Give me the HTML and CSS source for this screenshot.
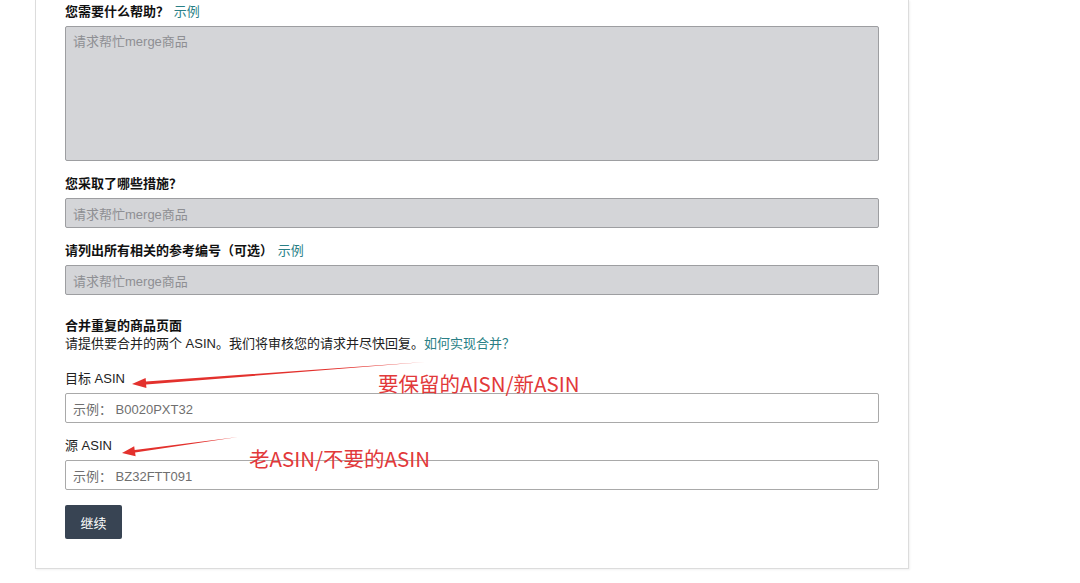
FILE: index.html
```html
<!DOCTYPE html>
<html lang="zh-CN">
<head>
<meta charset="utf-8">
<title>合并重复的商品页面</title>
<link rel="stylesheet" href="styles.css">
</head>
<body>
<div class="page">
  <div class="card">
    <div class="field">
      <div class="label"><b>您需要什么帮助？</b> <a class="link">示例</a></div>
      <div class="box grey area"><span class="ph">请求帮忙merge商品</span></div>
    </div>
    <div class="field">
      <div class="label"><b>您采取了哪些措施？</b></div>
      <div class="box grey"><span class="ph">请求帮忙merge商品</span></div>
    </div>
    <div class="field">
      <div class="label"><b>请列出所有相关的参考编号（可选）</b> <a class="link">示例</a></div>
      <div class="box grey"><span class="ph">请求帮忙merge商品</span></div>
    </div>
    <div class="section">
      <div class="title">合并重复的商品页面</div>
      <div class="desc">请提供要合并的两个 ASIN。我们将审核您的请求并尽快回复。<a class="link">如何实现合并？</a></div>
    </div>
    <div class="field asin">
      <div class="label">目标 ASIN</div>
      <div class="box white"><span class="ph2">示例： B0020PXT32</span></div>
    </div>
    <div class="field asin">
      <div class="label">源 ASIN</div>
      <div class="box white"><span class="ph2">示例： BZ32FTT091</span></div>
    </div>
    <button class="btn">继续</button>
  </div>

  <svg class="arrows" width="1080" height="583" viewBox="0 0 1080 583">
    <polygon points="425,362 146,381.5 145.6,378 132,384 146.4,388 146.1,384.5" fill="#e3312d"/>
    <polygon points="238,437 134.7,449.9 134.2,446.2 122,453 135.6,456.2 135.1,452.5" fill="#e3312d"/>
  </svg>
  <div class="note note1">要保留的AISN/新ASIN</div>
  <div class="note note2">老ASIN/不要的ASIN</div>
</div>
</body>
</html>
```
FILE: styles.css
```css
* { box-sizing: border-box; }
html, body {
  margin: 0;
  padding: 0;
  background: #ffffff;
  font-family: "Liberation Sans", "Noto Sans CJK SC", sans-serif;
  color: #111111;
  font-size: 13px;
}
.page {
  position: relative;
  width: 1080px;
  height: 583px;
  overflow: hidden;
}
.card {
  margin-left: 35px;
  width: 874px;
  border: 1px solid #dcdcdc;
  border-top: none;
  box-shadow: 1px 1px 2px rgba(0,0,0,0.06);
  padding: 3px 29px 29px 29px;
  display: flex;
  flex-direction: column;
  align-items: flex-start;
}
.field {
  width: 814px;
  display: flex;
  flex-direction: column;
  gap: 5px;
  margin-bottom: 14px;
}
.label {
  line-height: 18px;
  height: 18px;
  font-size: 13px;
}
.label b { font-weight: bold; }
.link {
  color: #2a7f86;
  margin-left: 1px;
}
.desc .link { margin-left: 0; }
.box {
  width: 814px;
  height: 30px;
  border: 1px solid #a3a3a3;
  border-radius: 2px;
  padding: 0 7px;
  display: flex;
  align-items: center;
}
.grey {
  background: #d4d5d8;
  border-color: #9d9ea1;
}
.area {
  height: 135px;
  align-items: flex-start;
  padding-top: 4px;
}
.ph {
  color: #8e8f93;
  font-size: 13px;
}
.white { background: #ffffff; border-color: #a9a9a9; }
.ph2 { color: #6f6f6f; font-size: 13px; }
.section {
  margin-top: 8px;
  margin-bottom: 17px;
}
.title {
  font-weight: bold;
  line-height: 18px;
}
.desc {
  line-height: 18px;
  color: #222;
}
.asin .label { color: #222; }
.asin { margin-bottom: 14px; }
.asin + .btn { margin-top: 1px; }
.btn {
  width: 57px;
  height: 34px;
  background: #384453;
  color: #ffffff;
  border: none;
  border-radius: 2px;
  font-family: "Liberation Sans", "Noto Sans CJK SC", sans-serif;
  font-size: 13px;
  padding: 0;
}
.arrows {
  position: absolute;
  left: 0;
  top: 0;
  pointer-events: none;
}
.note {
  position: absolute;
  color: #e2393a;
  font-family: "Noto Sans CJK SC", "Liberation Sans", sans-serif;
  font-size: 20.5px;
  line-height: 24px;
  white-space: nowrap;
}
.note1 { left: 378px; top: 371px; }
.note2 { left: 249px; top: 446px; }
```
